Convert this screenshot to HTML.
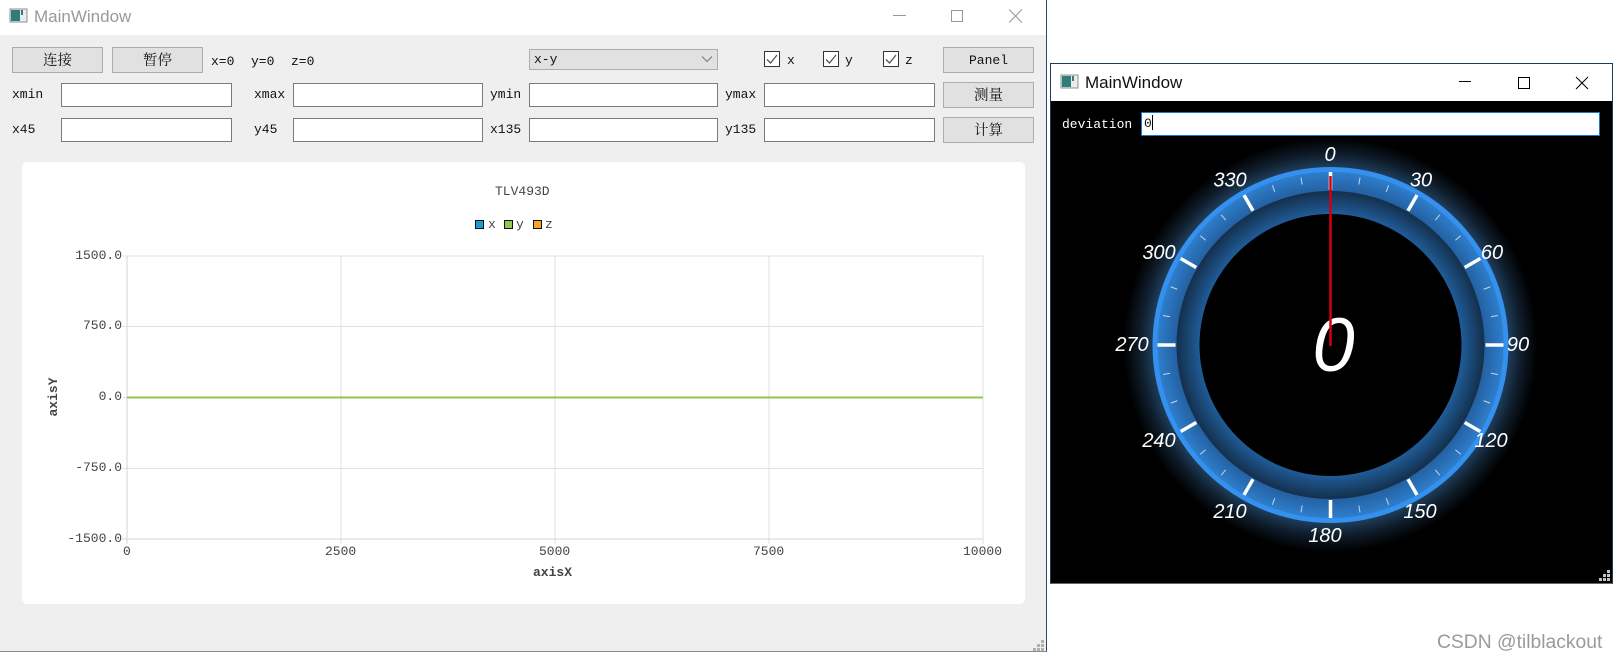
<!DOCTYPE html>
<html><head><meta charset="utf-8"><title>MainWindow</title>
<style>
html,body{margin:0;padding:0;background:#fff;width:1617px;height:659px;overflow:hidden}
*{box-sizing:border-box}
.a{position:absolute}
#w1{position:absolute;left:0;top:0;width:1047px;height:652px;background:#efefef;border-right:1px solid #2b4a6b;border-bottom:1px solid #7b8d99}
#t1{position:absolute;left:0;top:0;width:1046px;height:35px;background:#fff}
.title{position:absolute;font:17px "Liberation Sans",sans-serif;white-space:nowrap;line-height:20px}
.l{position:absolute;font:13px/16px "Liberation Mono",monospace;color:#111;white-space:nowrap}
.b{position:absolute;background:#e1e1e1;border:1px solid #adadad;text-align:center;color:#111;font:14.5px "Liberation Serif","Noto Serif CJK SC",serif;display:flex;align-items:center;justify-content:center;letter-spacing:0;padding-bottom:2px}
.i{position:absolute;background:#fff;border:1px solid #7a7a7a;width:171px;height:24px}
.c{position:absolute;width:16px;height:16px;background:#fff;border:1px solid #333}
#card{position:absolute;left:21.5px;top:162px;width:1003px;height:442px;background:#fff;border-radius:5px}
.ax{position:absolute;font:13px/16px "Liberation Mono",monospace;color:#444;white-space:nowrap}
.bold{font-weight:bold}
#w2{position:absolute;left:1050px;top:63px;width:563px;height:521px;background:#000;border:1px solid #1e3a55;border-bottom:1px solid #666}
#t2{position:absolute;left:0;top:0;width:561px;height:37px;background:#fff}
svg{position:absolute;left:0;top:0}
</style></head><body>

<div id="w1">
  <div id="t1"></div>
  <svg width="30" height="35"><rect x="10" y="9" width="17" height="13" fill="#e8ecec" stroke="#8a9090"/><rect x="11" y="10" width="9" height="11" fill="#2f7d78"/><rect x="21" y="10" width="2" height="5" fill="#55706e"/></svg>
  <div class="title" style="left:34px;top:7px;color:#999">MainWindow</div>
  <svg width="1047" height="35" style="pointer-events:none">
    <line x1="893" y1="15.5" x2="906" y2="15.5" stroke="#999"/>
    <rect x="951.5" y="10.5" width="11" height="11" fill="none" stroke="#999"/>
    <path d="M1009 9.5L1022 22.5M1022 9.5L1009 22.5" stroke="#999" fill="none"/>
  </svg>

  <div class="b" style="left:12px;top:47px;width:91px;height:26px">连接</div>
  <div class="b" style="left:112px;top:47px;width:91px;height:26px">暂停</div>
  <div class="l" style="left:211px;top:54px">x=0</div>
  <div class="l" style="left:251px;top:54px">y=0</div>
  <div class="l" style="left:291px;top:54px">z=0</div>

  <div class="b" style="left:529px;top:49px;width:189px;height:21px;justify-content:flex-start;padding-left:4px;padding-bottom:0;font:13px 'Liberation Mono',monospace">x-y</div>
  <svg width="1047" height="80" style="pointer-events:none"><path d="M702 56.5L707 61.5L712 56.5" stroke="#777" fill="none"/></svg>

  <div class="c" style="left:764px;top:51px"></div>
  <div class="c" style="left:823px;top:51px"></div>
  <div class="c" style="left:883px;top:51px"></div>
  <svg width="1047" height="80" style="pointer-events:none">
    <path d="M767 59.5L770.5 63L777 55" stroke="#555" stroke-width="1.3" fill="none"/>
    <path d="M826 59.5L829.5 63L836 55" stroke="#555" stroke-width="1.3" fill="none"/>
    <path d="M886 59.5L889.5 63L896 55" stroke="#555" stroke-width="1.3" fill="none"/>
  </svg>
  <div class="l" style="left:787px;top:53px">x</div>
  <div class="l" style="left:845px;top:53px">y</div>
  <div class="l" style="left:905px;top:53px">z</div>
  <div class="b" style="left:943px;top:47px;width:91px;height:26px;padding-bottom:0;font:13px 'Liberation Mono',monospace">Panel</div>
  <div class="b" style="left:943px;top:82px;width:91px;height:26px">测量</div>
  <div class="b" style="left:943px;top:117px;width:91px;height:26px">计算</div>

  <div class="l" style="left:12px;top:87px">xmin</div>
  <div class="i" style="left:61px;top:83px"></div>
  <div class="l" style="left:254px;top:87px">xmax</div>
  <div class="i" style="left:293px;top:83px;width:190px"></div>
  <div class="l" style="left:490px;top:87px">ymin</div>
  <div class="i" style="left:529px;top:83px;width:189px"></div>
  <div class="l" style="left:725px;top:87px">ymax</div>
  <div class="i" style="left:764px;top:83px"></div>

  <div class="l" style="left:12px;top:122px">x45</div>
  <div class="i" style="left:61px;top:118px"></div>
  <div class="l" style="left:254px;top:122px">y45</div>
  <div class="i" style="left:293px;top:118px;width:190px"></div>
  <div class="l" style="left:490px;top:122px">x135</div>
  <div class="i" style="left:529px;top:118px;width:189px"></div>
  <div class="l" style="left:725px;top:122px">y135</div>
  <div class="i" style="left:764px;top:118px"></div>

  <div id="card"></div>
  <svg width="1046" height="651" style="pointer-events:none">
    <g stroke="#e0e0e0" stroke-width="1" fill="none" shape-rendering="crispEdges">
      <line x1="127" y1="256" x2="983" y2="256"/>
      <line x1="127" y1="326.5" x2="983" y2="326.5"/>
      <line x1="127" y1="468.5" x2="983" y2="468.5"/>
      <line x1="341" y1="256" x2="341" y2="544"/>
      <line x1="555" y1="256" x2="555" y2="544"/>
      <line x1="769" y1="256" x2="769" y2="544"/>
      <line x1="983" y1="256" x2="983" y2="544"/>
      <line x1="122" y1="256" x2="127" y2="256"/>
      <line x1="122" y1="326.5" x2="127" y2="326.5"/>
      <line x1="122" y1="397.5" x2="127" y2="397.5"/>
      <line x1="122" y1="468.5" x2="127" y2="468.5"/>
    </g>
    <g stroke="#d4d4d4" stroke-width="1" fill="none" shape-rendering="crispEdges">
      <line x1="122" y1="539" x2="983" y2="539"/>
      <line x1="127" y1="256" x2="127" y2="544"/>
    </g>
    <line x1="127" y1="397.5" x2="983" y2="397.5" stroke="#95c454" stroke-width="2"/>
    <rect x="475.5" y="220.5" width="8" height="8" fill="#1f9ad6" stroke="#111"/>
    <rect x="504.5" y="220.5" width="8" height="8" fill="#95c454" stroke="#111"/>
    <rect x="533.5" y="220.5" width="8" height="8" fill="#f7a325" stroke="#111"/>
    <g fill="#b0b0b0">
      <rect x="1041" y="640" width="3" height="3"/>
      <rect x="1037" y="644" width="3" height="3"/><rect x="1041" y="644" width="3" height="3"/>
      <rect x="1033" y="648" width="3" height="3"/><rect x="1037" y="648" width="3" height="3"/><rect x="1041" y="648" width="3" height="3"/>
    </g>
  </svg>
  <div class="ax" style="left:495px;top:184px">TLV493D</div>
  <div class="ax" style="left:488px;top:217px">x</div>
  <div class="ax" style="left:516px;top:217px">y</div>
  <div class="ax" style="left:545px;top:217px">z</div>
  <div class="ax" style="right:924px;top:248px">1500.0</div>
  <div class="ax" style="right:924px;top:318px">750.0</div>
  <div class="ax" style="right:924px;top:389px">0.0</div>
  <div class="ax" style="right:924px;top:460px">-750.0</div>
  <div class="ax" style="right:924px;top:531px">-1500.0</div>
  <div class="ax" style="left:123px;top:544px">0</div>
  <div class="ax" style="left:325px;top:544px">2500</div>
  <div class="ax" style="left:539px;top:544px">5000</div>
  <div class="ax" style="left:753px;top:544px">7500</div>
  <div class="ax" style="left:963px;top:544px">10000</div>
  <div class="ax bold" style="left:533px;top:565px">axisX</div>
  <div class="ax bold" style="left:34px;top:389px;width:40px;text-align:center;transform:rotate(-90deg)">axisY</div>
</div>

<div id="w2">
  <div id="t2"></div>
  <svg width="30" height="37"><rect x="10" y="11" width="17" height="13" fill="#e8ecec" stroke="#8a9090"/><rect x="11" y="12" width="9" height="11" fill="#2f7d78"/><rect x="21" y="12" width="2" height="5" fill="#55706e"/></svg>
  <div class="title" style="left:34px;top:9px;color:#111">MainWindow</div>
  <svg width="561" height="37" style="pointer-events:none">
    <line x1="408" y1="17.5" x2="420" y2="17.5" stroke="#000"/>
    <rect x="467.5" y="13.5" width="11" height="11" fill="none" stroke="#000"/>
    <path d="M525 13L537 25M537 13L525 25" stroke="#000" fill="none"/>
  </svg>
  <div class="l" style="left:11px;top:53px;color:#fff">deviation</div>
  <div class="a" style="left:90px;top:48px;width:459px;height:24px;background:#fff;border:1px solid #1976d2;font:13px/22px 'Liberation Mono',monospace;color:#111;padding-left:2px">0<span style="display:inline-block;width:1px;height:15px;background:#000;vertical-align:-3px"></span></div>
</div>

<svg width="1617" height="659" style="pointer-events:none">
  <defs>
    <radialGradient id="glow" gradientUnits="userSpaceOnUse" cx="1330.5" cy="345" r="207">
      <stop offset="0.855" stop-color="#1f3f5e"/>
      <stop offset="0.92" stop-color="#0f1e2c"/>
      <stop offset="1" stop-color="#000"/>
    </radialGradient>
    <radialGradient id="blue" gradientUnits="userSpaceOnUse" cx="1330.5" cy="345" r="178">
      <stop offset="0.86" stop-color="#235f9f"/>
      <stop offset="0.97" stop-color="#2e7dcb"/>
      <stop offset="0.975" stop-color="#3491f0"/>
      <stop offset="1" stop-color="#3491f0"/>
    </radialGradient>
    <radialGradient id="dark" gradientUnits="userSpaceOnUse" cx="1330.5" cy="345" r="154">
      <stop offset="0.85" stop-color="#1f5c98"/>
      <stop offset="1" stop-color="#142f4b"/>
    </radialGradient>
  </defs>
  <circle cx="1330.5" cy="345" r="207" fill="url(#glow)"/>
  <circle cx="1330.5" cy="345" r="178" fill="url(#blue)"/>
  <circle cx="1330.5" cy="345" r="154" fill="url(#dark)"/>
  <circle cx="1330.5" cy="345" r="131" fill="#000"/>
  <g transform="translate(1330.5 345)">
    <g stroke="#fff" stroke-width="3.5">
      <line y1="-155" y2="-173"/>
      <line y1="-155" y2="-173" transform="rotate(30)"/>
      <line y1="-155" y2="-173" transform="rotate(60)"/>
      <line y1="-155" y2="-173" transform="rotate(90)"/>
      <line y1="-155" y2="-173" transform="rotate(120)"/>
      <line y1="-155" y2="-173" transform="rotate(150)"/>
      <line y1="-155" y2="-173" transform="rotate(180)"/>
      <line y1="-155" y2="-173" transform="rotate(210)"/>
      <line y1="-155" y2="-173" transform="rotate(240)"/>
      <line y1="-155" y2="-173" transform="rotate(270)"/>
      <line y1="-155" y2="-173" transform="rotate(300)"/>
      <line y1="-155" y2="-173" transform="rotate(330)"/>
    </g>
    <g stroke="#dfe9f3" stroke-width="1" stroke-opacity="0.85">
      <line y1="-163" y2="-170" transform="rotate(10)"/>
      <line y1="-163" y2="-170" transform="rotate(20)"/>
      <line y1="-163" y2="-170" transform="rotate(40)"/>
      <line y1="-163" y2="-170" transform="rotate(50)"/>
      <line y1="-163" y2="-170" transform="rotate(70)"/>
      <line y1="-163" y2="-170" transform="rotate(80)"/>
      <line y1="-163" y2="-170" transform="rotate(100)"/>
      <line y1="-163" y2="-170" transform="rotate(110)"/>
      <line y1="-163" y2="-170" transform="rotate(130)"/>
      <line y1="-163" y2="-170" transform="rotate(140)"/>
      <line y1="-163" y2="-170" transform="rotate(160)"/>
      <line y1="-163" y2="-170" transform="rotate(170)"/>
      <line y1="-163" y2="-170" transform="rotate(190)"/>
      <line y1="-163" y2="-170" transform="rotate(200)"/>
      <line y1="-163" y2="-170" transform="rotate(220)"/>
      <line y1="-163" y2="-170" transform="rotate(230)"/>
      <line y1="-163" y2="-170" transform="rotate(250)"/>
      <line y1="-163" y2="-170" transform="rotate(260)"/>
      <line y1="-163" y2="-170" transform="rotate(280)"/>
      <line y1="-163" y2="-170" transform="rotate(290)"/>
      <line y1="-163" y2="-170" transform="rotate(310)"/>
      <line y1="-163" y2="-170" transform="rotate(320)"/>
      <line y1="-163" y2="-170" transform="rotate(340)"/>
      <line y1="-163" y2="-170" transform="rotate(350)"/>
    </g>
  </g>
  <g font-family="Liberation Sans, sans-serif" font-style="italic" font-size="20" fill="#fff" text-anchor="middle">
    <text x="1330" y="161">0</text>
    <text x="1421" y="186.5">30</text>
    <text x="1492" y="259">60</text>
    <text x="1518" y="351">90</text>
    <text x="1491" y="447">120</text>
    <text x="1420" y="518">150</text>
    <text x="1325" y="542">180</text>
    <text x="1230" y="518">210</text>
    <text x="1159" y="447">240</text>
    <text x="1132" y="351">270</text>
    <text x="1159" y="259">300</text>
    <text x="1230" y="186.5">330</text>
    <text x="1333.5" y="371" font-size="76">0</text>
  </g>
  <line x1="1330.5" y1="176" x2="1330.5" y2="346" stroke="#d40012" stroke-width="2.5"/>
  <g fill="#c4c4c4">
    <rect x="1607" y="570" width="3" height="3"/>
    <rect x="1603" y="574" width="3" height="3"/><rect x="1607" y="574" width="3" height="3"/>
    <rect x="1599" y="578" width="3" height="3"/><rect x="1603" y="578" width="3" height="3"/><rect x="1607" y="578" width="3" height="3"/>
  </g>
</svg>

<div class="a" style="left:1437px;top:633px;font:19.3px/20px 'Liberation Sans',sans-serif;color:#9a9a9a;white-space:nowrap">CSDN @tilblackout</div>
</body></html>
